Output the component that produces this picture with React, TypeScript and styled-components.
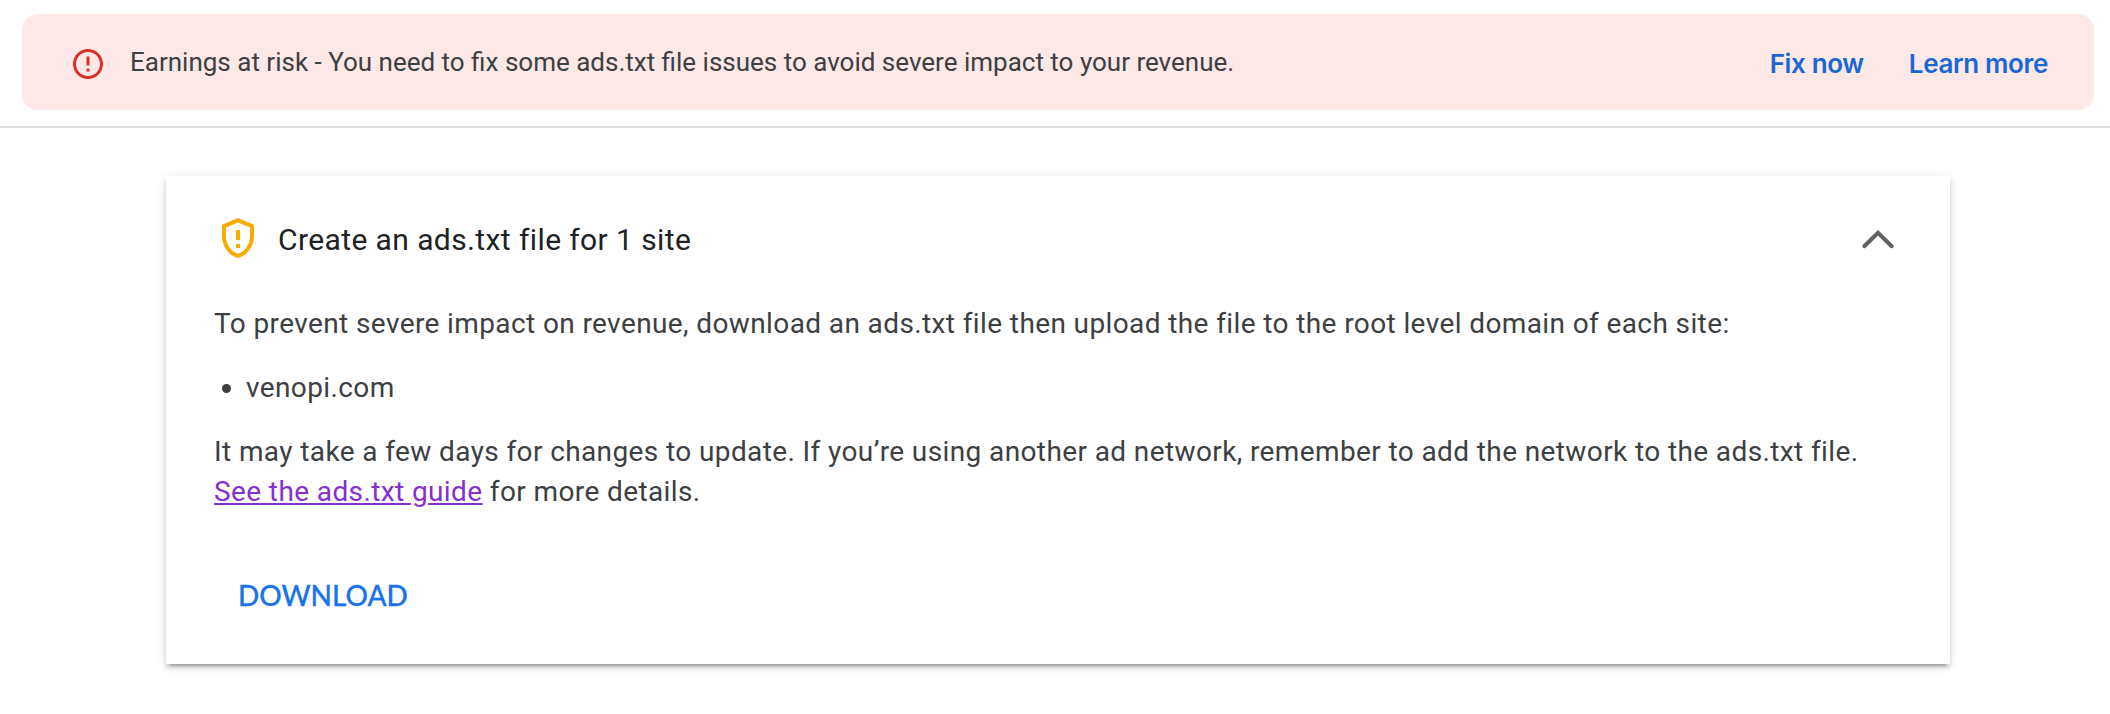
import React from 'react';
import styled, { createGlobalStyle } from 'styled-components';

const Global = createGlobalStyle`
  * { box-sizing: border-box; }
  body {
    margin: 0;
    background: #fff;
    font-family: Roboto, "Liberation Sans", sans-serif;
    color: #3c4043;
  }
`;

const Page = styled.div`
  display: flex;
  flex-direction: column;
  min-height: 100vh;
`;

const Header = styled.header`
  flex: none;
  height: 128px;
  padding: 14px 16px 0 22px;
  border-bottom: 2px solid #dadce0;
`;

const Banner = styled.div`
  display: flex;
  align-items: center;
  height: 96px;
  padding: 0 46px 0 48px;
  border-radius: 16px;
  background: #fce8e6;
`;

const ErrorIcon = styled.svg`
  flex: none;
  width: 36px;
  height: 36px;
  margin-top: 4px;
  fill: #d93025;
`;

const BannerText = styled.span`
  flex: 1;
  margin-left: 24px;
  font-size: 26px;
  white-space: nowrap;
`;

const BannerLinks = styled.nav`
  display: flex;
  gap: 45px;
  padding-top: 3px;
`;

const BannerLink = styled.a`
  font-family: Inter, "Liberation Sans", sans-serif;
  font-weight: 600;
  font-size: 26px;
  letter-spacing: -0.35px;
  color: #1967d2;
`;

const Card = styled.section`
  flex: none;
  width: 1784px;
  height: 488px;
  margin: 48px 0 0 166px;
  padding: 40px 48px 0;
  background: #fff;
  box-shadow:
    0 6px 2px -4px rgba(0, 0, 0, 0.2),
    0 4px 4px 0 rgba(0, 0, 0, 0.14),
    0 2px 10px 0 rgba(0, 0, 0, 0.12);
`;

const CardHeader = styled.div`
  display: flex;
  align-items: center;
  height: 48px;
`;

const ShieldIcon = styled.svg`
  flex: none;
  width: 48px;
  height: 48px;
  margin-top: -4px;
  fill: #f9ab00;
`;

const Title = styled.h2`
  flex: 1;
  margin: -2px 0 0 16px;
  font-size: 30px;
  font-weight: 400;
  letter-spacing: 0.4px;
  color: #202124;
`;

const Chevron = styled.svg`
  flex: none;
  width: 48px;
  height: 48px;
  fill: none;
  stroke: #616161;
  stroke-width: 4;
  stroke-linecap: round;
`;

const Body = styled.div`
  margin-top: 40px;
  font-size: 28px;
  line-height: 40px;
  letter-spacing: 0.39px;
`;

const Para = styled.p`
  margin: 0;
  white-space: nowrap;
`;

const SiteList = styled.ul`
  list-style: none;
  margin: 24px 0;
  padding: 0 0 0 8px;
`;

const Site = styled.li`
  display: flex;
  align-items: center;

  &::before {
    content: '';
    width: 9px;
    height: 9px;
    margin: 1px 15px 0 0;
    border-radius: 50%;
    background: #3c4043;
  }
`;

const GuideLink = styled.a`
  color: #8430ce;
  text-decoration: underline;
`;

const DownloadButton = styled.button`
  display: block;
  height: 40px;
  margin: 63px 0 0;
  padding: 0 24px;
  border: 0;
  background: none;
  font-family: Lato, "Liberation Sans", sans-serif;
  font-size: 28px;
  font-weight: 500;
  line-height: 40px;
  color: #1a73e8;
  -webkit-text-stroke: 0.3px #1a73e8;
`;

export default function App() {
  return (
    <Page>
      <Global />
      <Header>
        <Banner>
          <ErrorIcon viewBox="0 0 24 24">
            <path d="M11 15h2v2h-2zm0-8h2v6h-2zm.99-5C6.47 2 2 6.48 2 12s4.47 10 9.99 10C17.52 22 22 17.52 22 12S17.52 2 11.99 2zM12 20c-4.42 0-8-3.58-8-8s3.58-8 8-8 8 3.58 8 8-3.58 8-8 8z" />
          </ErrorIcon>
          <BannerText>
            Earnings at risk - You need to fix some ads.txt file issues to avoid severe impact to your revenue.
          </BannerText>
          <BannerLinks>
            <BannerLink>Fix now</BannerLink>
            <BannerLink>Learn more</BannerLink>
          </BannerLinks>
        </Banner>
      </Header>
      <Card>
        <CardHeader>
          <ShieldIcon viewBox="0 0 24 24">
            <path d="M12 2L4 5.4v5.69c0 5.05 3.41 9.76 8 10.91 4.59-1.15 8-5.86 8-10.91V5.4L12 2zm6 9.09c0 4-2.55 7.7-6 8.83-3.45-1.13-6-4.82-6-8.83V6.7l6-2.5 6 2.5v4.39zM11 15h2v2h-2zm0-7h2v5h-2z" />
          </ShieldIcon>
          <Title>Create an ads.txt file for 1 site</Title>
          <Chevron viewBox="0 0 48 48">
            <path d="M10.3 30.2 24 16.8l13.7 13.4" />
          </Chevron>
        </CardHeader>
        <Body>
          <Para>
            To prevent severe impact on revenue, download an ads.txt file then upload the file to the root level domain of each site:
          </Para>
          <SiteList>
            <Site>venopi.com</Site>
          </SiteList>
          <Para>
            It may take a few days for changes to update. If you’re using another ad network, remember to add the network to the ads.txt file.
            <br />
            <GuideLink>See the ads.txt guide</GuideLink> for more details.
          </Para>
        </Body>
        <DownloadButton>DOWNLOAD</DownloadButton>
      </Card>
    </Page>
  );
}
